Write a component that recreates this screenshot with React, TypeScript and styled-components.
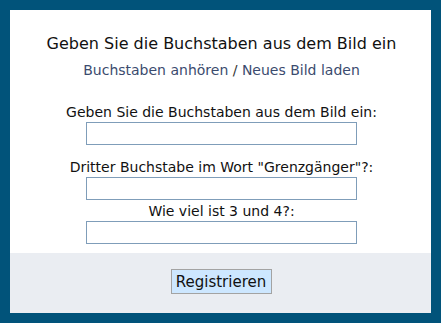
import styled, { createGlobalStyle } from "styled-components";

const GlobalStyle = createGlobalStyle`
  html, body {
    margin: 0;
    padding: 0;
    background: #01537a;
  }
  body {
    font-family: "DejaVu Sans", Verdana, sans-serif;
  }
`;

const Frame = styled.div`
  width: 441px;
  height: 323px;
  box-sizing: border-box;
  padding: 10px;
  background: #01537a;
`;

const Panel = styled.div`
  display: flex;
  flex-direction: column;
  height: 100%;
  background: #ffffff;
`;

const Body = styled.div`
  display: flex;
  flex-direction: column;
  align-items: center;
  padding: 24px 0 0 2px;
  height: 243px;
  flex-shrink: 0;
  box-sizing: border-box;
`;

const Heading = styled.div`
  font-size: 16px;
  color: #111111;
  line-height: 20px;
`;

const Links = styled.div`
  margin-top: 8px;
  font-size: 14px;
  line-height: 17px;
  color: #333333;
`;

const Link = styled.a`
  color: #3b4b6e;
  text-decoration: none;
`;

const Field = styled.div<{ $gap: number }>`
  align-self: stretch;
  display: flex;
  flex-direction: column;
  align-items: center;
  margin-top: ${p => p.$gap}px;
`;

const Label = styled.label`
  font-size: 14px;
  line-height: 17px;
  color: #111111;
`;

const Input = styled.input`
  margin: 1px 0 0;
  width: 271px;
  height: 23px;
  box-sizing: border-box;
  border: 1px solid #7f9db9;
  background: #ffffff;
  outline: none;
`;

const Footer = styled.div`
  flex: 1;
  display: flex;
  justify-content: center;
  align-items: flex-start;
  padding: 16px 0 0 1px;
  background: #eaedf2;
`;

const Button = styled.button`
  width: 101px;
  height: 25px;
  padding: 0;
  border: 1px solid #a3a3a3;
  background: #cde7ff;
  font-family: "DejaVu Sans", Verdana, sans-serif;
  font-size: 15px;
  color: #111111;
`;

export default function App() {
  return (
    <>
      <GlobalStyle />
      <Frame>
        <Panel>
          <Body>
            <Heading>Geben Sie die Buchstaben aus dem Bild ein</Heading>
            <Links>
              <Link href="#">Buchstaben anhören</Link> / <Link href="#">Neues Bild laden</Link>
            </Links>
            <Field $gap={25}>
              <Label>Geben Sie die Buchstaben aus dem Bild ein:</Label>
              <Input type="text" />
            </Field>
            <Field $gap={14}>
              <Label>Dritter Buchstabe im Wort "Grenzgänger"?:</Label>
              <Input type="text" />
            </Field>
            <Field $gap={3}>
              <Label>Wie viel ist 3 und 4?:</Label>
              <Input type="text" />
            </Field>
          </Body>
          <Footer>
            <Button type="button">Registrieren</Button>
          </Footer>
        </Panel>
      </Frame>
    </>
  );
}
